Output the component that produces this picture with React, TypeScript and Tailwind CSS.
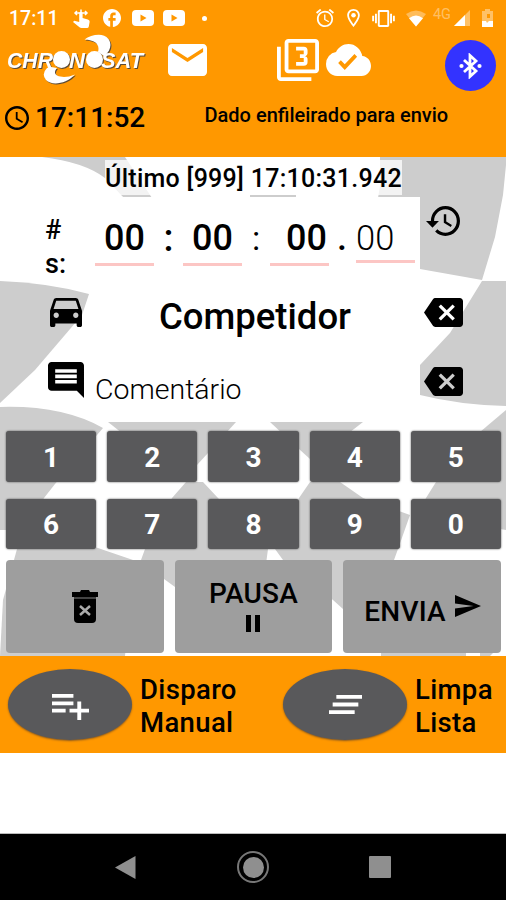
import React from 'react';
import {
  MdAccessTime,
  MdAlarm,
  MdBackspace,
  MdClearAll,
  MdCloudDone,
  MdComment,
  MdDirectionsCar,
  MdFacebook,
  MdFilter3,
  MdHistory,
  MdMail,
  MdOutlineLocationOn,
  MdPlaylistAdd,
  MdSend,
  MdVibration,
} from 'react-icons/md';

const keys = ['1', '2', '3', '4', '5', '6', '7', '8', '9', '0'];

function YoutubeIcon() {
  return (
    <svg viewBox="0 0 22 16" className="w-[22px] h-4">
      <rect width="22" height="16" rx="4" fill="#fff" />
      <path d="M8.5 4.5v7l6-3.5z" fill="#ff9800" />
    </svg>
  );
}

function StatusBar() {
  return (
    <div className="flex h-9 items-center pl-[9px] pr-[13px] text-white">
      <span className="w-[64px] pt-px text-[19.5px] leading-none font-medium">17:11</span>
      <svg viewBox="0 0 17 19" className="w-[17px] h-[19px]">
        <path d="M2 4h12M4 2 2 4l2 2M12 2l2 2-2 2M8 0.5v4" stroke="#fff" strokeWidth="1.5" fill="none" />
        <path d="M6.2 4.5a1.7 1.7 0 0 1 3.4 0V9l5.2 1.6c1.4.5 2 1.2 1.8 2.500L15.800 17.500q-.3 1.500-1.800 1.500H8.500q-1.200 0-2-.8L0 13l1.200-1.300 5 1.300z" fill="#fff" />
      </svg>
      <MdFacebook viewBox="2 2 20 20" className="ml-[13px] w-[18px] h-[18px]" />
      <div className="ml-[11px] flex gap-[9px]">
        <YoutubeIcon />
        <YoutubeIcon />
      </div>
      <span className="ml-[17px] w-[5px] h-[5px] rounded-full bg-white" />

      <div className="ml-auto flex items-center">
        <MdAlarm viewBox="2 2 20 20" className="w-[18px] h-[18px]" />
        <MdOutlineLocationOn viewBox="5 2 14 20" className="ml-[13px] w-[13px] h-[18px]" />
        <MdVibration viewBox="0 3 24 18" className="ml-[12px] w-[23px] h-[17px]" />
        <svg viewBox="0 0 20 17" className="ml-[11px] w-5 h-[17px]">
          <path d="M10 16.500 0 4Q10-3 20 4z" fill="#fff" opacity=".35" />
          <path d="M10 16.500 3 8.200Q10 3 17 8.200z" fill="#fff" />
        </svg>
        <span className="ml-[7px] -mt-[5px] text-[14.5px] leading-none text-white/40">4G</span>
        <svg viewBox="0 0 16 16" className="ml-[3px] w-4 h-4">
          <path d="M0 16 16 0v16z" fill="#fff" opacity=".4" />
          <path d="M0 16 11 5v11z" fill="#fff" />
        </svg>
        <svg viewBox="0 0 11 18" className="ml-[12px] w-[11px] h-[18px]">
          <path d="M3 0h5v2h3v16H0V2h3z" fill="#fff" opacity=".4" />
          <path d="M0 12h4l1 2 2-2h4v6H0z" fill="#fff" />
          <path d="M5 5h3v4H5z" fill="#ff9800" />
        </svg>
      </div>
    </div>
  );
}

function Logo() {
  return (
    <svg viewBox="0 0 144 54" className="w-36 h-[54px] overflow-visible drop-shadow-[1px_1px_0.5px_#5b4a36]">
      <g fill="#fff" fontSize="22" fontWeight="700" fontStyle="italic" fontFamily="Liberation Sans, Arial, sans-serif">
        <text x="7" y="31.500" textLength="46" lengthAdjust="spacingAndGlyphs">CHR</text>
        <circle cx="61.500" cy="23.500" r="8.500" />
        <text x="69" y="31.500" textLength="16" lengthAdjust="spacingAndGlyphs">N</text>
        <circle cx="94.500" cy="23.500" r="8.500" />
        <text x="101" y="31.500" textLength="42" lengthAdjust="spacingAndGlyphs">SAT</text>
        <path d="M84.500 3.500C91-1 103-4 108.500 3C112 8 111 15 104 20L98 16C100 9 96 4 84.500 3.500z" />
        <path d="M51 31L57 32C52 38 57 41 64 41Q69 41 75 38.500C66 48 52 50 46 44Q41 38 47 32z" />
      </g>
    </svg>
  );
}

function Header() {
  return (
    <header className="h-[157px] bg-[#ff9800]">
      <StatusBar />
      <div className="flex h-[54px] items-start">
        <Logo />
        <MdMail viewBox="2 4 20 16" preserveAspectRatio="none" className="ml-6 mt-2 w-[39px] h-8 text-white" />
        <MdFilter3 viewBox="1 1 22 22" className="ml-[70px] mt-[3px] w-[42px] h-[42px] text-white" />
        <MdCloudDone viewBox="0 4 24 16" preserveAspectRatio="none" className="ml-[7px] mt-2 w-[45px] h-8 text-white" />
        <div className="ml-[74px] mt-1 flex w-[51px] h-[51px] items-center justify-center rounded-full bg-[#3333ff]">
          <svg viewBox="0 0 23 26" className="w-[23px] h-[26px]">
            <path d="M5 7l12 11-6 5.500v-21L17 8 5 19" stroke="#fff" strokeWidth="2.800" fill="none" />
            <circle cx="2.500" cy="13" r="2.100" fill="#fff" />
            <circle cx="20.500" cy="13" r="2.100" fill="#fff" />
          </svg>
        </div>
      </div>
      <div className="flex h-[56px] items-center pl-[5px]">
        <MdAccessTime viewBox="2 2 20 20" className="w-6 h-6" />
        <span className="ml-[6px] w-[169.500px] text-[28px] font-medium leading-none">17:11:52</span>
        <span className="-mt-[7px] text-[20px] font-medium leading-none">Dado enfileirado para envio</span>
      </div>
    </header>
  );
}

/* Waving chequered flag behind the form */
function Flag() {
  return (
    <svg viewBox="0 157 506 499" className="absolute inset-0 w-full h-full" fill="#cdcdcd">
      <path d="M42 157h83l27 41h-28l-19-20Q84 162 42 157z" />
      <path d="M250 195h46v3h-46z" />
      <path d="M380 157h126v8l-3 30-8 42-13 43-62-11v-71h-42l2-12z" />
      <path d="M0 281q50 2 89 13l-7 21-47 55-35 33z" />
      <path d="M482 281h24v125q-46-1-86-11v-30l30-32z" />
      <path d="M0 407q62-2 103 21l-48 56-11 14-19 32H0z" />
      <path d="M108 422h128l-28 31-11 12-60-20z" />
      <path d="M270 422h93l-18 14-35 23-11-10z" />
      <path d="M506 410l-26 22-44 50-10 16-10 17 90 15z" />
      <path d="M186 482h17l15 16 50 51-8 60-85-22-11-8-23-19 4-11 27-51z" />
      <path d="M310 482h30l23 16 47 17-12 34-4 11-51 49-10-9-50-40-8-11 24-51z" />
      <path d="M17 549q45-7 78-2l38 13-8 96H0l3-56z" />
      <path d="M381 648h85v8h-85z" />
      <path d="M480 648h18l-8 8h-10z" />
    </svg>
  );
}

function TimeField({ value, thin }: { value: string; thin?: boolean }) {
  return (
    <div
      className={
        thin
          ? 'w-[59px] h-[66px] border-b-[3px] border-[#fcc6c4] pt-[23px] text-[34.500px] leading-[36px] font-light'
          : 'w-[59px] h-[69px] border-b-[3px] border-[#fcc6c4] pt-[23px] pl-[9px] text-[36px] leading-[36px] font-medium'
      }
    >
      {value}
    </div>
  );
}

function TimeRow() {
  return (
    <div className="flex h-[89px]">
      <div className="w-[95px] pl-[45px] pt-[16px] text-[27px] leading-[34px] font-medium">
        #<br />s:
      </div>
      <div className="flex w-[325px] bg-white">
        <TimeField value="00" />
        <span className="w-[29px] pt-[23px] text-center text-[38px] leading-[36px] font-medium">:</span>
        <TimeField value="00" />
        <span className="w-[28px] pt-[23px] text-center text-[34px] leading-[36px]">:</span>
        <div className="-mr-px w-[59px] h-[69px] border-b-[3px] border-[#fcc6c4] pt-[23px] pl-[16px] text-[36px] leading-[36px] font-medium">00</div>
        <span className="w-[28px] pt-[23px] text-center text-[36px] leading-[36px] font-medium">.</span>
        <TimeField value="00" thin />
      </div>
      <MdHistory viewBox="1 3 21 18" preserveAspectRatio="none" className="ml-[6px] mt-[9px] w-[34px] h-[30px]" />
    </div>
  );
}

function Form() {
  return (
    <div className="relative">
      <div className="h-10 pl-[105px] pt-[3px]">
        <div className="w-[297px] h-[35px] bg-white/75 text-[25px] leading-[38px] tracking-[0.28px] font-medium whitespace-nowrap">
          Último [999] 17:10:31.942
        </div>
      </div>

      <TimeRow />

      <div className="flex h-[69px]">
        <div className="w-[95px] pl-[50px] pt-3">
          <MdDirectionsCar viewBox="3 5 18 16" preserveAspectRatio="none" className="w-8 h-[29px]" />
        </div>
        <div className="w-[325px] bg-white pt-[9px] pr-[5px] text-center text-[36.500px] leading-[44px] font-medium">Competidor</div>
        <MdBackspace viewBox="0 3 24 18" preserveAspectRatio="none" className="ml-1 mt-3 w-[39px] h-[29px]" />
      </div>

      <div className="flex h-[67px]">
        <div className="w-[95px] pl-[48px] pt-[7px]">
          <MdComment viewBox="2 2 20 20" className="w-9 h-9" />
        </div>
        <div className="w-[325px] bg-white pt-[17px] text-[28.500px] leading-[36px] font-light">Comentário</div>
        <MdBackspace viewBox="0 3 24 18" preserveAspectRatio="none" className="ml-1 mt-3 w-[39px] h-[29px]" />
      </div>
    </div>
  );
}

function Keypad() {
  return (
    <div className="relative grid grid-cols-5 gap-x-[11px] gap-y-[17px] pl-[6px] pr-[5px] pt-[9px]">
      {keys.map((key) => (
        <button
          key={key}
          className="h-[50.500px] rounded-[3px] bg-[#59595b] pt-[3px] text-[28px] leading-none font-bold text-white shadow-[0_0_2px_#444]"
        >
          {key}
        </button>
      ))}
    </div>
  );
}

function Actions() {
  return (
    <div className="relative grid grid-cols-3 gap-x-[11px] pl-[6px] pr-[5px] pt-[11px] text-[28px] leading-none font-medium">
      <button className="flex h-[93px] items-center justify-center rounded-[4px] bg-[#9e9e9e]">
        <svg viewBox="0 0 26 33" className="w-[26px] h-[33px]">
          <path d="M0 2h8l1-2h8l1 2h8v5H0z" />
          <path d="M2 7h22v2H2z" fill="#444" />
          <path d="M2 9h22v20q0 4-4 4H6q-4 0-4-4z" />
          <path d="m8 16 10 9M18 16 8 25" stroke="#aaa" strokeWidth="2.500" />
        </svg>
      </button>
      <button className="flex h-[93px] flex-col items-center rounded-[4px] bg-[#9e9e9e] pt-[20px] tracking-[0.2px]">
        PAUSA
        <span className="mt-[7px] flex gap-1">
          <i className="w-[5px] h-[17px] bg-black" />
          <i className="w-[5px] h-[17px] bg-black" />
        </span>
      </button>
      <button className="flex h-[93px] rounded-[4px] bg-[#9e9e9e] pl-[21px] pt-[37px] tracking-[0.2px]">
        <span className="pt-px">ENVIA</span>
        <MdSend viewBox="2 3 21 18" preserveAspectRatio="none" className="-mt-[2px] ml-[9px] w-[26px] h-[22px]" />
      </button>
    </div>
  );
}

function Footer() {
  return (
    <footer className="flex h-[97px] bg-[#ff9800] pl-2 pt-[13px] text-[27.500px] leading-[33px] tracking-[0.35px] font-medium">
      <button className="flex w-[124px] h-[71px] items-center justify-center rounded-[50%] bg-[#59595b] text-white shadow-[0_1px_2px_#8a5a20]">
        <MdPlaylistAdd viewBox="3 6 19 14" preserveAspectRatio="none" className="mt-1 w-[37px] h-[26px]" />
      </button>
      <div className="ml-[8px] mt-1 w-[143px]">
        Disparo
        <br />
        Manual
      </div>
      <button className="flex w-[124px] h-[71px] items-center justify-center rounded-[50%] bg-[#59595b] text-white shadow-[0_1px_2px_#8a5a20]">
        <MdClearAll viewBox="3 7 18 10" preserveAspectRatio="none" className="w-[33px] h-[19px]" />
      </button>
      <div className="ml-[8px] mt-1">
        Limpa
        <br />
        Lista
      </div>
    </footer>
  );
}

function NavBar() {
  return (
    <nav className="flex h-[67px] items-center border-t border-[#bbb] bg-black pl-[115px]">
      <svg viewBox="0 0 21 23" className="w-[21px] h-[23px]">
        <path d="M0 11.500 20.500 0v23z" fill="#8f8f8f" />
      </svg>
      <div className="ml-[101px] flex w-8 h-8 items-center justify-center rounded-full border-2 border-[#777]">
        <div className="w-[21px] h-[21px] rounded-full bg-[#8f8f8f]" />
      </div>
      <div className="ml-[100px] w-[22px] h-[22px] rounded-[1px] bg-[#8f8f8f]" />
    </nav>
  );
}

export default function App() {
  return (
    <div className="flex w-[506px] h-[900px] flex-col overflow-hidden bg-white font-['Roboto',sans-serif] text-black">
      <Header />
      <main className="relative h-[499px]">
        <Flag />
        <Form />
        <Keypad />
        <Actions />
      </main>
      <Footer />
      <div className="flex-1" />
      <NavBar />
    </div>
  );
}
